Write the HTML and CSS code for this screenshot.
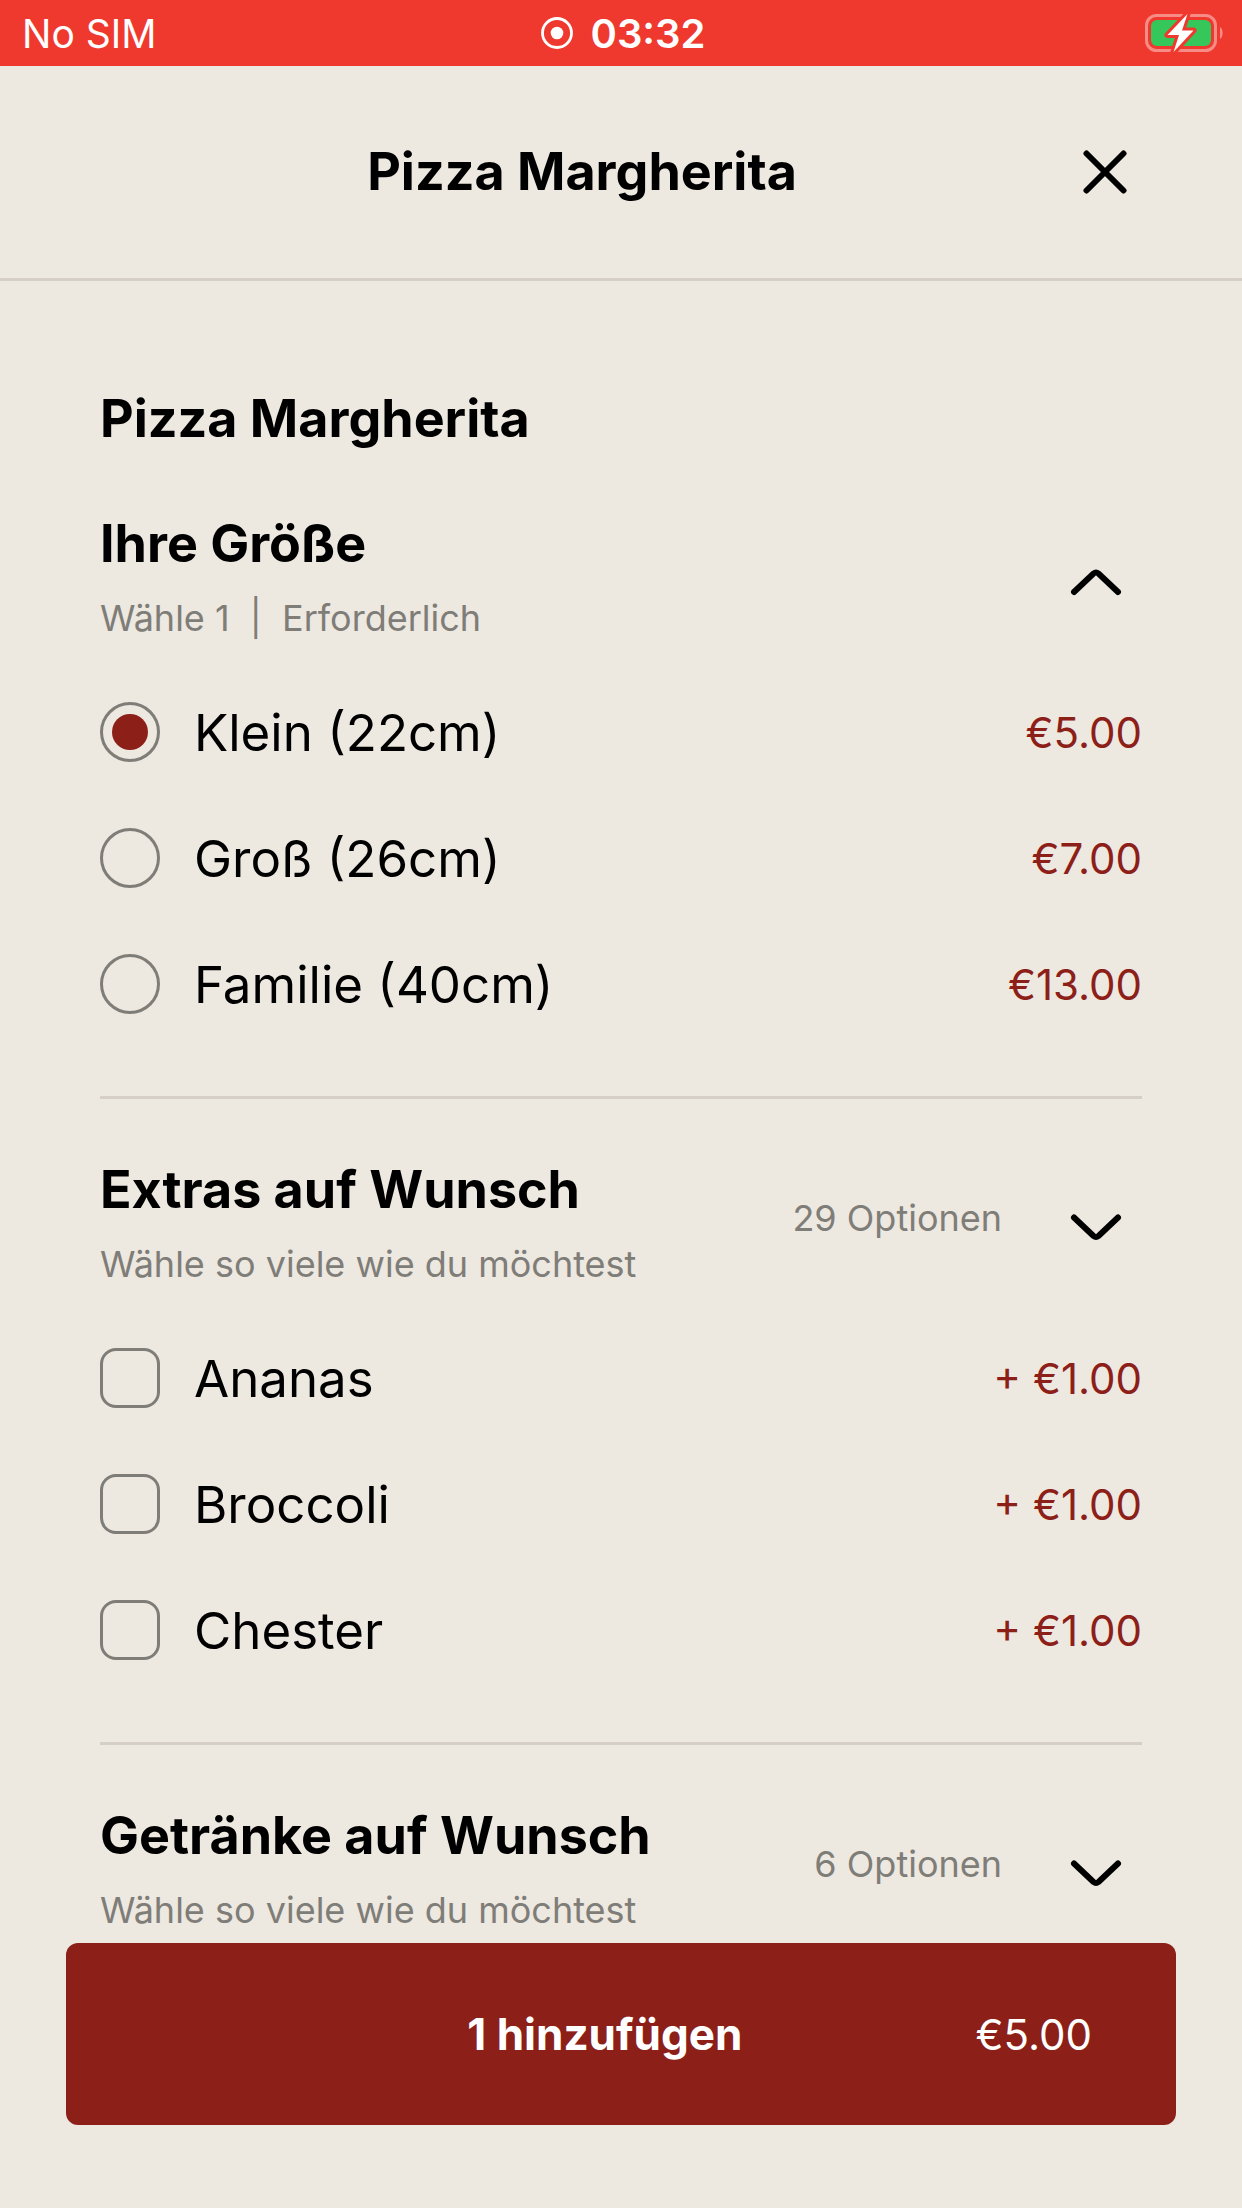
FILE: index.html
```html
<!DOCTYPE html>
<html lang="de">
<head>
<meta charset="utf-8">
<meta name="viewport" content="width=device-width, initial-scale=1">
<title>Pizza Margherita</title>
<link rel="stylesheet" href="styles.css">
</head>
<body>
<div class="app">
  <div class="status">
    <span class="status-carrier">No SIM</span>
    <span class="status-time">
      <svg class="record" viewBox="0 0 32 32" aria-hidden="true"><circle cx="16" cy="16" r="14.5" fill="none" stroke="currentColor" stroke-width="2.8"/><circle cx="16" cy="16" r="6.3" fill="currentColor"/></svg>
      03:32
    </span>
    <svg class="battery" viewBox="0 0 80 40" aria-hidden="true">
      <rect x="2.5" y="2.5" width="69" height="35" rx="10" fill="none" stroke="#fff" stroke-opacity=".42" stroke-width="3"/>
      <path d="M76 14c3.4 1.600 3.400 10.400 0 12z" fill="#fff" fill-opacity=".42"/>
      <rect x="7" y="7" width="60" height="26" rx="6" fill="#35c759"/>
      <path d="M43.500 1 23.500 22h11.500l-5.500 17 20-21.500h-11.500z" fill="#fff" stroke="#f0392e" stroke-width="6" stroke-linejoin="round" paint-order="stroke"/>
    </svg>
  </div>

  <header class="header">
    <h1 class="title">Pizza Margherita</h1>
    <button class="close" type="button" aria-label="Schließen">
      <svg viewBox="0 0 44 44" aria-hidden="true"><path d="M3.500 3.500 40.500 40.500M40.500 3.500 3.500 40.500"/></svg>
    </button>
  </header>

  <main class="content">
    <h2 class="title product">Pizza Margherita</h2>

    <section class="group">
      <div class="group-head">
        <div class="group-text">
          <h3 class="title" id="size">Ihre Größe</h3>
          <p class="hint">Wähle 1 &nbsp;|&nbsp; Erforderlich</p>
        </div>
        <button class="toggle" type="button" aria-label="Größen einklappen" aria-expanded="true">
          <svg viewBox="0 0 92 64" aria-hidden="true"><path d="M24 48 43.500 29.500q2.500-2 5 0L68 48"/></svg>
        </button>
      </div>
      <div class="options" role="radiogroup" aria-labelledby="size">
        <label class="option"><input class="control radio" type="radio" name="size" checked><span class="name">Klein (22cm)</span><span class="price">€5.00</span></label>
        <label class="option"><input class="control radio" type="radio" name="size"><span class="name">Groß (26cm)</span><span class="price">€7.00</span></label>
        <label class="option"><input class="control radio" type="radio" name="size"><span class="name">Familie (40cm)</span><span class="price">€13.00</span></label>
      </div>
    </section>

    <section class="group">
      <div class="group-head">
        <div class="group-text">
          <h3 class="title">Extras auf Wunsch</h3>
          <p class="hint">Wähle so viele wie du möchtest</p>
        </div>
        <span class="hint count">29 Optionen</span>
        <button class="toggle" type="button" aria-label="Alle Extras zeigen" aria-expanded="false">
          <svg viewBox="0 0 92 64" aria-hidden="true"><path d="M24 27.500 43.500 46q2.500 2 5 0L68 27.500"/></svg>
        </button>
      </div>
      <div class="options">
        <label class="option"><input class="control" type="checkbox"><span class="name">Ananas</span><span class="price">+ €1.00</span></label>
        <label class="option"><input class="control" type="checkbox"><span class="name">Broccoli</span><span class="price">+ €1.00</span></label>
        <label class="option"><input class="control" type="checkbox"><span class="name">Chester</span><span class="price">+ €1.00</span></label>
      </div>
    </section>

    <section class="group">
      <div class="group-head">
        <div class="group-text">
          <h3 class="title">Getränke auf Wunsch</h3>
          <p class="hint">Wähle so viele wie du möchtest</p>
        </div>
        <span class="hint count">6 Optionen</span>
        <button class="toggle" type="button" aria-label="Alle Getränke zeigen" aria-expanded="false">
          <svg viewBox="0 0 92 64" aria-hidden="true"><path d="M24 27.500 43.500 46q2.500 2 5 0L68 27.500"/></svg>
        </button>
      </div>
    </section>
  </main>

  <footer class="footer">
    <button class="add" type="button"><span class="add-label">1 hinzufügen</span><span class="add-price">€5.00</span></button>
  </footer>
</div>
</body>
</html>
```
FILE: styles.css
```css
* {
  box-sizing: border-box;
}

body {
  margin: 0;
  background: #ede8e0;
  color: #000;
  font-family: Inter, "Liberation Sans", sans-serif;
}

button {
  padding: 0;
  border: 0;
  background: none;
  color: inherit;
  font: inherit;
  cursor: pointer;
}

h1, h2, h3, p {
  margin: 0;
}

svg {
  display: block;
}

.app {
  display: flex;
  flex-direction: column;
  height: 100vh;
}

/* Status bar */
.status {
  display: grid;
  grid-template-columns: 1fr auto 1fr;
  align-items: center;
  flex: none;
  height: 66px;
  padding: 0 18px 0 22px;
  background: #f0392e;
  color: #fff;
  font-size: 39px;
}

.status-time {
  display: flex;
  align-items: center;
  gap: 18px;
  font-size: 40px;
  font-weight: 600;
}

.record {
  width: 32px;
  height: 32px;
}

.battery {
  justify-self: end;
  width: 80px;
  height: 40px;
}

/* Header */
.header {
  display: flex;
  align-items: center;
  gap: 34px;
  flex: none;
  height: 215px;
  padding: 0 115px;
  border-bottom: 3px solid #d5cfc7;
}

.header .title {
  flex: 1;
  text-align: center;
}

.title {
  font-size: 52px;
  line-height: 66px;
  font-weight: 700;
}

.close {
  width: 44px;
  height: 44px;
}

.close path,
.toggle path {
  fill: none;
  stroke: currentColor;
  stroke-width: 6;
  stroke-linecap: round;
}

/* Option groups */
.content {
  flex: 1;
  min-height: 0;
  padding: 105px 100px 0;
  overflow-y: auto;
  scrollbar-width: none;
}

.product {
  margin-bottom: 1px;
}

.group-head {
  display: flex;
  align-items: center;
  padding-top: 58px;
}

.group-text {
  display: flex;
  flex-direction: column;
  gap: 19px;
  flex: 1;
}

.hint {
  color: #7f7d78;
  font-size: 36px;
  line-height: 44px;
}

.count {
  padding-bottom: 8px;
}

.toggle {
  width: 92px;
  height: 64px;
  margin-left: 48px;
}

.options {
  padding: 29px 0 49px;
  border-bottom: 3px solid #d5cfc7;
}

.option {
  display: flex;
  align-items: center;
  height: 126px;
}

.control {
  flex: none;
  display: grid;
  place-items: center;
  width: 60px;
  height: 60px;
  margin: 0;
  border: 3px solid #7f7d78;
  border-radius: 16px;
  appearance: none;
}

.radio {
  border-radius: 50%;
}

.control:checked::before {
  content: "";
  width: 36px;
  height: 36px;
  border-radius: 50%;
  background: #8c2018;
}

.name {
  flex: 1;
  padding-left: 34px;
  font-size: 51px;
}

.price {
  color: #8c2018;
  font-size: 42px;
}

/* Add to basket */
.footer {
  flex: none;
  padding: 0 66px 83px;
}

.add {
  display: flex;
  align-items: center;
  width: 100%;
  height: 182px;
  padding: 0 84px 0 168px;
  border-radius: 12px;
  background: #8c2018;
  color: #fff;
}

.add-label {
  flex: 1;
  font-size: 44px;
  font-weight: 700;
}

.add-price {
  font-size: 42px;
}
```
